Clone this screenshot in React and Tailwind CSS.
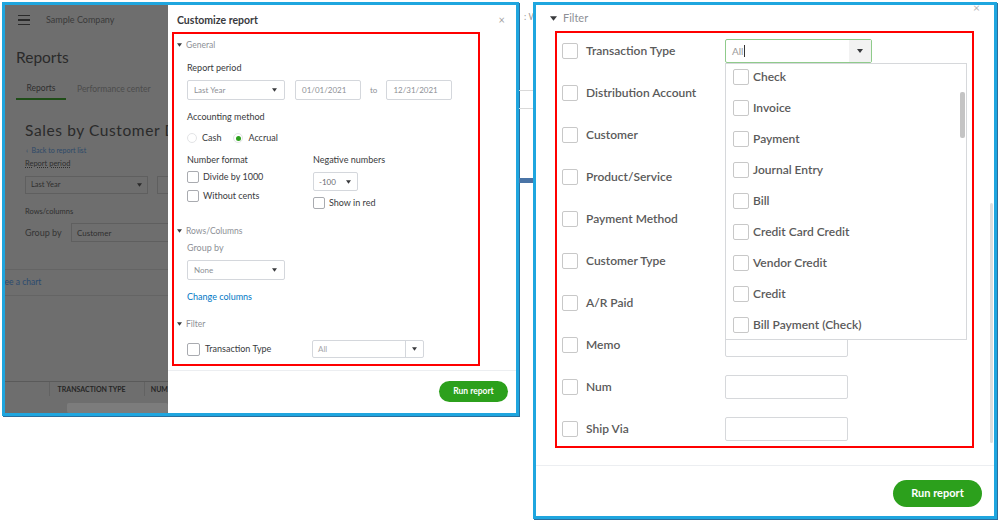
import React from 'react';

// small filled triangle used for selects and section toggles
const Caret = ({ className = '' }) => (
  <svg className={className} viewBox="0 0 6 4" fill="currentColor">
    <path d="M0 0h6L3 4z" />
  </svg>
);

const SmallBox = ({ className = '' }) => (
  <span className={`block w-[12px] h-[12px] border border-[#a9abb0] rounded-[2px] bg-white shrink-0 ${className}`} />
);

const BigBox = ({ className = '' }) => (
  <span className={`block w-[16px] h-[16px] border-[1.5px] border-[#c8c8c8] rounded-[2px] bg-white shrink-0 ${className}`} />
);

const SectionHead = ({ label }) => (
  <div className="flex items-center h-[10px]">
    <Caret className="w-[5px] h-[4px] text-[#393a3d]" />
    <span className="ml-[4px] text-[8.5px] leading-[10px] text-[#8d9096]">{label}</span>
  </div>
);

// greyed report page behind the drawer
const BackdropReport = () => (
  <div className="w-[163px] shrink-0 bg-[#6e6e6e] text-[#2e2e2e] overflow-hidden flex flex-col">
    <div className="h-[30px] flex items-center pl-[13px]">
      <div className="w-[12px] flex flex-col gap-[3px]">
        <span className="h-[1.5px] bg-[#2a2a2a]" />
        <span className="h-[1.5px] bg-[#2a2a2a]" />
        <span className="h-[1.5px] bg-[#2a2a2a]" />
      </div>
      <span className="ml-[16px] text-[9px] text-[#3a3a3a] whitespace-nowrap">Sample Company</span>
    </div>
    <div className="mt-[12px] pl-[11px] text-[15.5px] leading-[20px] text-[#2a2a2a]">Reports</div>
    <div className="mt-[11px] flex items-end">
      <div className="ml-[11px] w-[50px] h-[22px] border-b-2 border-[#1f4d18] flex items-center justify-center text-[8.5px] text-[#2e2e2e]">Reports</div>
      <div className="ml-[11px] h-[22px] flex items-center text-[8.5px] text-[#4c4c4c] whitespace-nowrap">Performance center</div>
    </div>
    <div className="mt-[19px] pl-[20px] text-[15.5px] leading-[22px] tracking-[0.6px] text-[#2a2a2a] whitespace-nowrap">Sales by Customer Detail</div>
    <div className="mt-[5px] pl-[21px] text-[7px] leading-[8px] text-[#2d4969] whitespace-nowrap">‹&nbsp; Back to report list</div>
    <div className="mt-[2px] pl-[20px] leading-[8px]">
      <span className="text-[7.5px] leading-[8px] text-[#2e2e2e] underline decoration-dotted">Report period</span>
    </div>
    <div className="mt-[8px] ml-[20px] flex">
      <div className="w-[123px] h-[18px] shrink-0 border border-[#5f5f5f] flex items-center justify-between px-[5px] text-[7.5px]">
        <span>Last Year</span>
        <Caret className="w-[5px] h-[4px] text-[#2a2a2a]" />
      </div>
      <div className="ml-[9px] w-[40px] h-[18px] shrink-0 border border-[#5f5f5f]" />
    </div>
    <div className="mt-[14px] pl-[20px] text-[7.5px] leading-[8px]">Rows/columns</div>
    <div className="mt-[7px] ml-[20px] flex items-center">
      <span className="w-[46px] shrink-0 text-[9px] text-[#353535]">Group by</span>
      <div className="w-[120px] h-[19px] shrink-0 border border-[#5f5f5f] flex items-center pl-[5px] text-[8px]">Customer</div>
    </div>
    <div className="mt-[27px] h-px bg-[#646464]" />
    <div className="h-[25px] flex items-center -ml-[5px] text-[8.5px] text-[#2b4a6e] whitespace-nowrap">See a chart</div>
    <div className="h-px bg-[#646464]" />
    <div className="mt-[85px] h-[15px] border-t border-[#5a5a5a] flex items-center text-[7px] font-bold text-[#262626] whitespace-nowrap">
      <span className="w-[45px] h-full border-r border-[#626262]" />
      <span className="w-[96px] h-full border-r border-[#626262] pl-[8px] flex items-center">TRANSACTION TYPE</span>
      <span className="pl-[6px]">NUM</span>
    </div>
    <div className="mt-[7px] ml-[62px] h-[10px] bg-[#7c7c7c] rounded-[2px]" />
  </div>
);

const LeftSelect = ({ w, text, muted }) => (
  <div className={`${w} h-[20px] shrink-0 border border-[#d4d7dc] rounded-[2px] flex items-center justify-between pl-[6px] pr-[7px] text-[8px] ${muted ? 'text-[#8d9096]' : 'text-[#393a3d]'}`}>
    <span>{text}</span>
    <Caret className="w-[5px] h-[4px] text-[#393a3d]" />
  </div>
);

const CustomizePanel = () => (
  <div className="flex-1 bg-white flex flex-col text-[#393a3d]">
    <div className="flex items-center justify-between pt-[9px] pl-[9px] pr-[11px]">
      <span className="text-[10.5px] leading-[12px] font-bold">Customize report</span>
      <span className="text-[11px] leading-[12px] text-[#a4a4a4]">×</span>
    </div>
    <div className="mt-[6px] ml-[4px] w-[308px] h-[334px] border-2 border-[#ff0000] pl-[3px] pt-[6px] flex flex-col">
      <SectionHead label="General" />
      <div className="pl-[10px] flex flex-col">
        <div className="mt-[13px] text-[9px] leading-[10px]">Report period</div>
        <div className="mt-[7px] flex items-center">
          <LeftSelect w="w-[98px]" text="Last Year" muted />
          <div className="ml-[10px] w-[66px] h-[20px] border border-[#d4d7dc] rounded-[2px] flex items-center pl-[6px] text-[8px] text-[#8d9096]">01/01/2021</div>
          <span className="ml-[9px] text-[8px] text-[#8d9096]">to</span>
          <div className="ml-[9px] w-[66px] h-[20px] border border-[#d4d7dc] rounded-[2px] flex items-center pl-[6px] text-[8px] text-[#8d9096]">12/31/2021</div>
        </div>
        <div className="mt-[12px] text-[9px] leading-[10px]">Accounting method</div>
        <div className="mt-[10px] h-[12px] flex items-center text-[9px] leading-[12px]">
          <span className="w-[10px] h-[10px] rounded-full border border-[#e3e4e6]" />
          <span className="ml-[5px]">Cash</span>
          <span className="ml-[12px] w-[10px] h-[10px] rounded-full border border-[#e3e4e6] flex items-center justify-center">
            <span className="w-[5px] h-[5px] rounded-full bg-[#2ca01c]" />
          </span>
          <span className="ml-[5px]">Accrual</span>
        </div>
        <div className="mt-[11px] flex">
          <div className="w-[126px] flex flex-col">
            <div className="text-[9px] leading-[10px]">Number format</div>
            <div className="mt-[6px] flex items-center text-[9px] leading-[12px]">
              <SmallBox />
              <span className="ml-[4px]">Divide by 1000</span>
            </div>
            <div className="mt-[7px] flex items-center text-[9px] leading-[12px]">
              <SmallBox />
              <span className="ml-[4px]">Without cents</span>
            </div>
          </div>
          <div className="flex flex-col">
            <div className="text-[9px] leading-[10px]">Negative numbers</div>
            <div className="mt-[7px] w-[45px] h-[19px] border border-[#d4d7dc] rounded-[2px] flex items-center justify-between pl-[5px] pr-[6px] text-[8px] text-[#6b6c72]">
              <span>-100</span>
              <Caret className="w-[5px] h-[4px] text-[#393a3d]" />
            </div>
            <div className="mt-[6px] flex items-center text-[9px] leading-[12px]">
              <SmallBox />
              <span className="ml-[4px]">Show in red</span>
            </div>
          </div>
        </div>
      </div>
      <div className="mt-[17px]">
        <SectionHead label="Rows/Columns" />
      </div>
      <div className="pl-[10px] flex flex-col">
        <div className="mt-[7px] text-[9px] leading-[10px] text-[#8d9096]">Group by</div>
        <div className="mt-[7px]">
          <LeftSelect w="w-[98px]" text="None" muted />
        </div>
        <div className="mt-[12px] text-[9px] leading-[10px] text-[#0077c5]">Change columns</div>
      </div>
      <div className="mt-[17px]">
        <SectionHead label="Filter" />
      </div>
      <div className="pl-[10px] mt-[11px] flex items-center">
        <div className="w-[125px] flex items-center">
          <span className="block w-[13px] h-[13px] border border-[#a9abb0] rounded-[2px]" />
          <span className="ml-[5px] text-[9px]">Transaction Type</span>
        </div>
        <div className="w-[112px] h-[18px] border border-[#d4d7dc] rounded-[2px] flex">
          <span className="flex-1 flex items-center pl-[5px] text-[8px] text-[#a4a6aa]">All</span>
          <span className="w-[18px] border-l border-[#d4d7dc] flex items-center justify-center">
            <Caret className="w-[5px] h-[4px] text-[#393a3d]" />
          </span>
        </div>
      </div>
    </div>
    <div className="mt-[4px] border-t border-[#eceef1]" />
    <div className="mt-[10px] flex justify-end pr-[8px]">
      <button className="w-[69px] h-[21px] rounded-full bg-[#2ca01c] text-white text-[8.5px] font-bold">Run report</button>
    </div>
  </div>
);

const filterRows = [
  'Transaction Type',
  'Distribution Account',
  'Customer',
  'Product/Service',
  'Payment Method',
  'Customer Type',
  'A/R Paid',
  'Memo',
  'Num',
  'Ship Via',
];

const txTypes = [
  'Check',
  'Invoice',
  'Payment',
  'Journal Entry',
  'Bill',
  'Credit Card Credit',
  'Vendor Credit',
  'Credit',
  'Bill Payment (Check)',
];

const TypeDropdown = () => (
  <div className="relative w-[147px] h-[24px] border border-[#8fcb8b] rounded-[2px] flex">
    <span className="flex-1 flex items-center pl-[6px] text-[10px] text-[#9a9a9a]">
      All<span className="ml-[1px] w-px h-[12px] bg-[#333]" />
    </span>
    <span className="w-[22px] bg-[#f2f2f2] flex items-center justify-center">
      <Caret className="w-[6px] h-[4px] text-[#393a3d]" />
    </span>
    <div className="absolute top-[23px] left-[-1px] z-10 w-[242px] h-[277px] bg-white border border-[#d6d8db] overflow-hidden">
      <div className="-mt-[3px] flex flex-col">
        {txTypes.map((t) => (
          <div key={t} className="h-[31px] flex items-center pl-[7px]">
            <BigBox />
            <span className="ml-[4px] text-[12px] font-semibold text-[#5a5a5a] whitespace-nowrap">{t}</span>
          </div>
        ))}
      </div>
      <span className="absolute right-[1px] top-[28px] w-[5px] h-[46px] bg-[#c4c4c4] rounded-[2px]" />
    </div>
  </div>
);

const FilterPanel = () => (
  <div className="relative w-[464px] h-[517px] shrink-0 border-[3px] border-[#1fa6df] shadow-[1px_1px_0_0_#2a6f9e] bg-white flex flex-col">
    <div className="h-[26px] flex items-center pl-[14px]">
      <Caret className="w-[7px] h-[5px] text-[#393a3d]" />
      <span className="ml-[6px] text-[11px] text-[#8d9096]">Filter</span>
    </div>
    <span className="absolute top-[-3px] right-[14px] text-[12px] leading-[12px] text-[#b4b4b4]">×</span>
    <div className="ml-[19px] w-[419px] h-[417px] border-2 border-[#ff0000] flex flex-col gap-[6px]">
      {filterRows.map((label, i) => (
        <div key={label} className="h-[36px] shrink-0 flex items-center">
          <BigBox className="ml-[5px]" />
          <span className="ml-[8px] w-[139px] text-[12px] font-semibold text-[#5a5a5a] whitespace-nowrap">{label}</span>
          {i === 0 ? (
            <TypeDropdown />
          ) : i >= 7 ? (
            <span className="w-[123px] h-[24px] border border-[#d6d8db] rounded-[2px]" />
          ) : null}
        </div>
      ))}
    </div>
    <div className="mt-[17px] border-t border-[#eceef1]" />
    <div className="mt-[14px] flex justify-end pr-[12px]">
      <button className="w-[89px] h-[27px] rounded-full bg-[#2ca01c] text-white text-[11px] font-bold">Run report</button>
    </div>
    <span className="absolute right-[1px] top-[198px] w-[3px] h-[240px] bg-[#dedede] rounded-[2px]" />
  </div>
);

export default function App() {
  return (
    <div className="w-[999px] h-[520px] bg-white flex items-start pt-[2px] pl-[2px] overflow-hidden font-[Lato,'Open_Sans',sans-serif]">
      <div className="w-[517px] h-[414px] shrink-0 border-[3px] border-[#1fa6df] shadow-[1px_1px_0_0_#2a6f9e] flex">
        <BackdropReport />
        <CustomizePanel />
      </div>
      <div className="w-[14px] shrink-0 flex flex-col">
        <span className="mt-[10px] pl-[5px] text-[9px] leading-[10px] text-[#9a9a9a] whitespace-nowrap">: W</span>
        <span className="mt-[68px] h-px bg-[#d9d9d9]" />
        <span className="mt-[17px] h-px bg-[#d9d9d9]" />
        <span className="mt-[69px] h-[5px] bg-[#4a74a6]" />
      </div>
      <FilterPanel />
    </div>
  );
}
